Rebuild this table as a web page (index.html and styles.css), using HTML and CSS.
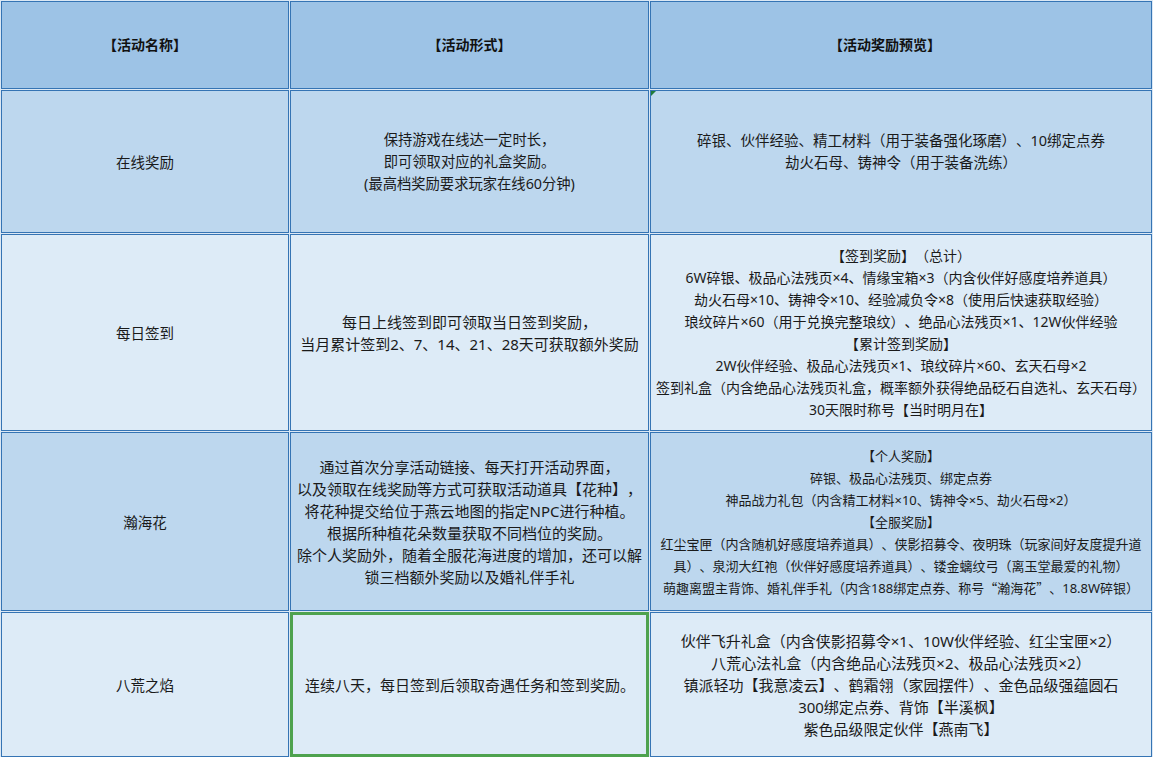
FILE: index.html
```html
<!DOCTYPE html>
<html lang="zh-CN">
<head>
<meta charset="utf-8">
<title>活动一览</title>
<link rel="stylesheet" href="styles.css">
</head>
<body>
<table class="sheet">
  <colgroup>
    <col class="c1">
    <col class="c2">
    <col class="c3">
  </colgroup>
  <tr class="r-head">
    <th>【活动名称】</th>
    <th>【活动形式】</th>
    <th class="h-reward">【活动奖励预览】</th>
  </tr>
  <tr class="r1 dark">
    <td class="name">在线奖励</td>
    <td class="f143">保持游戏在线达一定时长，<br>即可领取对应的礼盒奖励。<br>(最高档奖励要求玩家在线60分钟)</td>
    <td class="flag f145">碎银、伙伴经验、精工材料（用于装备强化琢磨）、10绑定点券<br>劫火石母、铸神令（用于装备洗练）<br>&nbsp;</td>
  </tr>
  <tr class="r2 light">
    <td class="name">每日签到</td>
    <td class="f15">每日上线签到即可领取当日签到奖励，<br>当月累计签到2、7、14、21、28天可获取额外奖励</td>
    <td class="f14">【签到奖励】（总计）<br>6W碎银、极品心法残页×4、情缘宝箱×3（内含伙伴好感度培养道具）<br>劫火石母×10、铸神令×10、经验减负令×8（使用后快速获取经验）<br>琅纹碎片×60（用于兑换完整琅纹）、绝品心法残页×1、12W伙伴经验<br>【累计签到奖励】<br>2W伙伴经验、极品心法残页×1、琅纹碎片×60、玄天石母×2<br>签到礼盒（内含绝品心法残页礼盒，概率额外获得绝品砭石自选礼、玄天石母）<br>30天限时称号【当时明月在】</td>
  </tr>
  <tr class="r3 dark">
    <td class="name">瀚海花</td>
    <td class="f15">通过首次分享活动链接、每天打开活动界面，<br>以及领取在线奖励等方式可获取活动道具【花种】，<br>将花种提交给位于燕云地图的指定NPC进行种植。<br>根据所种植花朵数量获取不同档位的奖励。<br>除个人奖励外，随着全服花海进度的增加，还可以解<br>锁三档额外奖励以及婚礼伴手礼</td>
    <td class="f13">【个人奖励】<br>碎银、极品心法残页、绑定点券<br>神品战力礼包（内含精工材料×10、铸神令×5、劫火石母×2）<br>【全服奖励】<br>红尘宝匣（内含随机好感度培养道具）、侠影招募令、夜明珠（玩家间好友度提升道<br>具）、泉沏大红袍（伙伴好感度培养道具）、镂金螭纹弓（离玉堂最爱的礼物）<br>萌趣离盟主背饰、婚礼伴手礼（内含188绑定点券、称号<span class="cjk">“瀚海花”</span>、18.8W碎银）</td>
  </tr>
  <tr class="r4 light">
    <td class="name">八荒之焰</td>
    <td class="selected f15">连续八天，每日签到后领取奇遇任务和签到奖励。</td>
    <td class="f15">伙伴飞升礼盒（内含侠影招募令×1、10W伙伴经验、红尘宝匣×2）<br>八荒心法礼盒（内含绝品心法残页×2、极品心法残页×2）<br>镇派轻功【我意凌云】、鹤霜翎（家园摆件）、金色品级强蕴圆石<br>300绑定点券、背饰【半溪枫】<br>紫色品级限定伙伴【燕南飞】</td>
  </tr>
</table>
</body>
</html>
```

FILE: styles.css
```css
html, body {
  margin: 0;
  padding: 0;
  background: #dce8f4;
  overflow: hidden;
}

.sheet {
  border-collapse: separate;
  border-spacing: 1px;
  table-layout: fixed;
  width: 1153px;
  background: #dce8f4;
  font-family: "Noto Sans", "Noto Sans CJK SC", sans-serif;
  font-size: 14px;
  line-height: 22px;
  color: #1a1a1a;
  text-spacing-trim: space-all;
}

.c1 { width: 288px; }
.c2 { width: 359px; }
.c3 { width: 502px; }

.sheet th,
.sheet td {
  border: 1px solid #3574b4;
  text-align: center;
  vertical-align: middle;
  padding: 0 2px;
  white-space: nowrap;
  box-sizing: border-box;
}

.sheet th {
  background: #9dc3e6;
  font-weight: bold;
  color: #111;
  font-size: 14px;
}

.sheet th.h-reward { padding-right: 34px; }

.r-head th { height: 88px; }
.r1 td { height: 143px; }
.r2 td { height: 197px; }
.r3 td { height: 179px; }
.r4 td { height: 145px; }

.dark td { background: #bdd7ee; }
.light td { background: #ddebf7; }

.name { font-size: 14.5px; }
.f13 { font-size: 13px; }
.f14 { font-size: 14px; }
.f143 { font-size: 14.3px; }
.f145 { font-size: 14.5px; }
.f15 { font-size: 15px; }

.cjk { font-family: "Noto Sans CJK SC", sans-serif; }

.flag { position: relative; }
.flag::before {
  content: "";
  position: absolute;
  left: 0;
  top: 0;
  width: 0;
  height: 0;
  border-top: 5px solid #1f7a3a;
  border-right: 5px solid transparent;
}

.sheet td.selected {
  border: 3px solid #4ea24e;
  text-align: left;
  padding-left: 12px;
}
```
